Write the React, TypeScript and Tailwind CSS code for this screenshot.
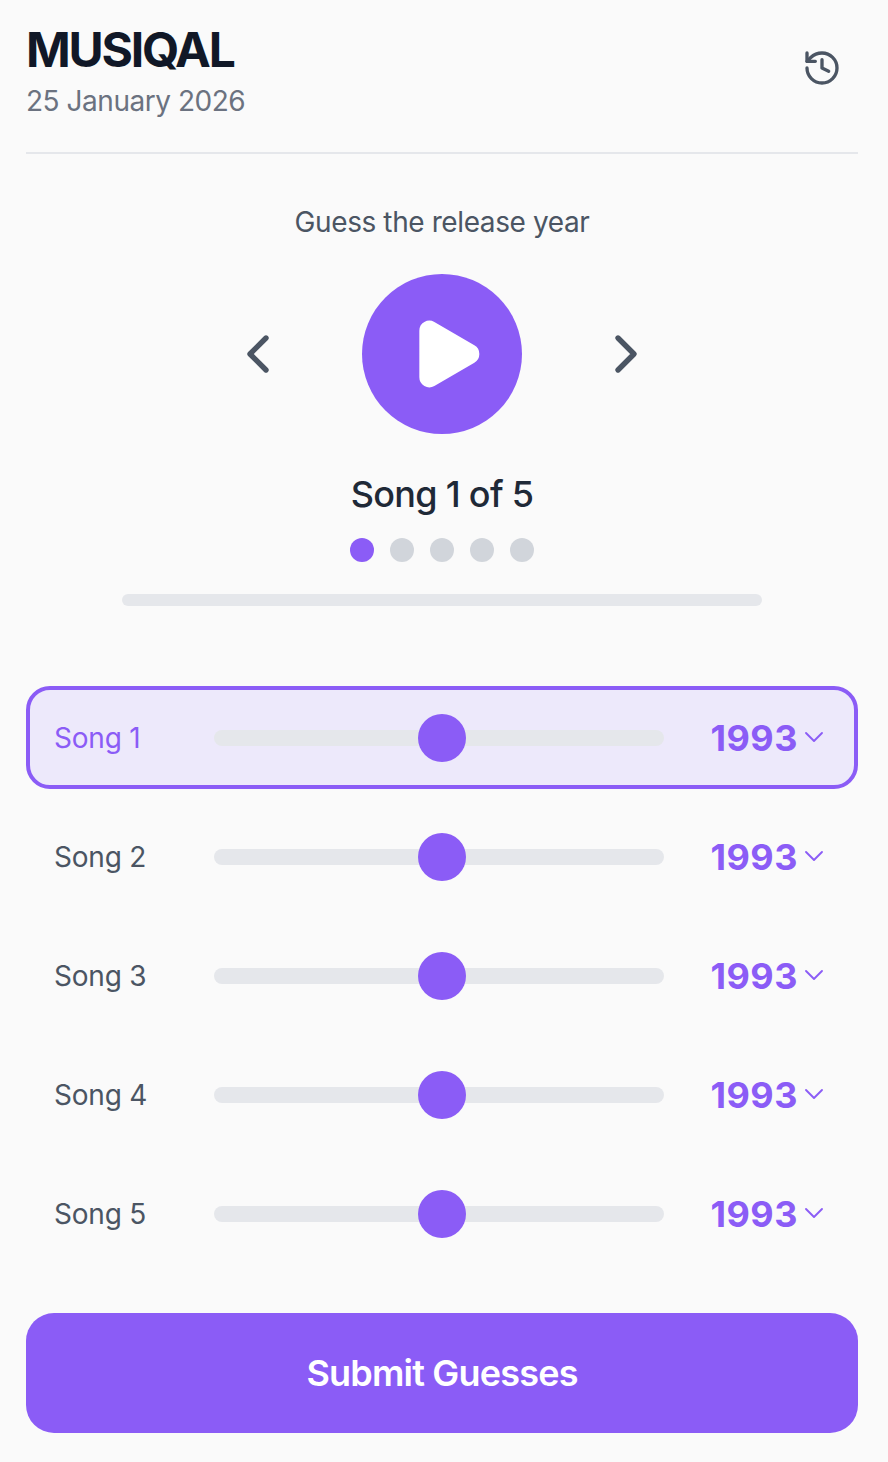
import { ChevronDown, ChevronLeft, ChevronRight, History, Play } from "lucide-react";

const songs = ["Song 1", "Song 2", "Song 3", "Song 4", "Song 5"];

function SongRow({ name, active }: { name: string; active: boolean }) {
  return (
    <div
      className={`flex h-[103px] items-center rounded-[24px] border-4 px-6 ${
        active ? "border-[#8b5cf6] bg-[#ede9fb]" : "border-transparent"
      }`}
    >
      <span className={`w-[160px] text-[28px] tracking-[-0.2px] ${active ? "text-[#8b5cf6]" : "text-[#4b5563]"}`}>{name}</span>
      <div className="relative h-4 flex-1 rounded-full bg-[#e5e7eb]">
        <div className="absolute top-1/2 left-[204px] h-12 w-12 -translate-y-1/2 rounded-full bg-[#8b5cf6]" />
      </div>
      <div className="flex w-[166px] items-center justify-end text-[#8b5cf6]">
        <span className="text-[36px] font-bold tracking-[0.5px]">1993</span>
        <ChevronDown size={32} strokeWidth={1.4} className="mb-[2px]" />
      </div>
    </div>
  );
}

export default function App() {
  return (
    <div className="min-h-[1462px] bg-[#fafafa] pt-[20px] pr-[30px] pl-[26px] font-['Inter',sans-serif]">
      <header className="flex h-[134px] items-start justify-between border-b-2 border-[#e5e7eb]">
        <div>
          <h1 className="text-[48px] leading-[60px] font-bold tracking-[-2.2px] text-[#111827]">MUSIQAL</h1>
          <p className="mt-[1px] text-[28px] leading-[40px] tracking-[-0.47px] text-[#6b7280]">25 January 2026</p>
        </div>
        <button className="mt-[28px] mr-[16px] text-[#4b5563]">
          <History size={40} strokeWidth={2} />
        </button>
      </header>

      <section className="flex flex-col items-center pt-[48px]">
        <p className="text-[28px] leading-[40px] tracking-[-0.4px] text-[#4b5563]">Guess the release year</p>
        <div className="mt-[32px] flex items-center gap-[72px]">
          <ChevronLeft size={64} strokeWidth={2} className="text-[#4b5563]" />
          <button className="flex h-[160px] w-[160px] items-center justify-center rounded-full bg-[#8b5cf6]">
            <Play size={80} strokeWidth={2} className="ml-2 fill-white text-white" />
          </button>
          <ChevronRight size={64} strokeWidth={2} className="text-[#4b5563]" />
        </div>
        <p className="mt-[40px] text-[36px] leading-[40px] font-medium tracking-[-0.7px] text-[#1f2937]">Song 1 of 5</p>
        <div className="mt-[24px] flex gap-4">
          {[0, 1, 2, 3, 4].map((i) => (
            <div key={i} className={`h-6 w-6 rounded-full ${i === 0 ? "bg-[#8b5cf6]" : "bg-[#d1d5db]"}`} />
          ))}
        </div>
        <div className="mt-[32px] h-3 w-[640px] rounded-full bg-[#e5e7eb]" />
      </section>

      <section className="mt-[80px] flex flex-col gap-4">
        {songs.map((s, i) => (
          <SongRow key={s} name={s} active={i === 0} />
        ))}
      </section>

      <button className="mt-[48px] h-[120px] w-full rounded-[28px] bg-[#8b5cf6] text-[36px] font-semibold tracking-[-0.8px] text-white">
        Submit Guesses
      </button>
    </div>
  );
}
